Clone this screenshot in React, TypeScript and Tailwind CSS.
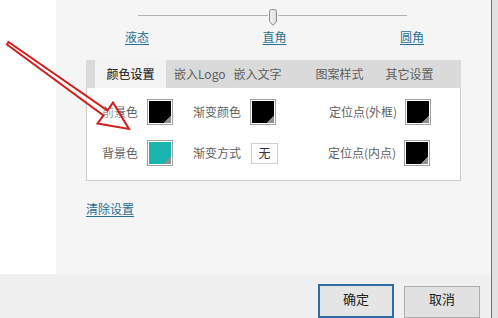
import React from "react";

const font = { fontFamily: '"Noto Sans CJK SC", "Noto Sans", sans-serif' };

function Swatch({ color }: { color: "black" | "teal" }) {
  const inner =
    color === "black"
      ? "bg-[linear-gradient(135deg,#000_83%,#8f8f8f_83%)]"
      : "bg-[linear-gradient(135deg,#19b4ad_83%,#8f8f8f_83%)]";
  return (
    <div className="w-[26px] h-[26px] border border-[#a3a3a3] bg-white p-[1px] flex">
      <div className={`flex-1 ${inner}`} />
    </div>
  );
}

export default function App() {
  return (
    <div
      className="relative w-[498px] h-[318px] overflow-hidden flex bg-[#e4e4e4] text-[12px] leading-[16px]"
      style={font}
    >
      <div className="w-[491px] flex flex-col">
        <div className="h-[277px] flex">
          <div className="w-[56px] bg-white" />
          <div className="flex-1 bg-[#f5f5f5] flex flex-col">
            {/* slider */}
            <div className="mt-[9px] ml-[82px] w-[269px] h-[17px] flex items-start">
              <div className="w-[130px] h-px mt-[6px] bg-[#b3b3b3]" />
              <svg width="10" height="17" viewBox="0 0 10 17" className="block">
                <defs>
                  <linearGradient id="tg" x1="0" y1="0" x2="1" y2="0">
                    <stop offset="0" stopColor="#f4f4f4" />
                    <stop offset="1" stopColor="#dcdcdc" />
                  </linearGradient>
                </defs>
                <path
                  d="M1.5 2.5 Q1.5 0.5 3.5 0.5 L6.5 0.5 Q8.5 0.5 8.5 2.5 L8.5 12.5 L5 16.3 L1.5 12.5 Z"
                  fill="url(#tg)"
                  stroke="#8c8c8c"
                  strokeWidth="1"
                />
              </svg>
              <div className="flex-1 h-px mt-[6px] bg-[#b3b3b3]" />
            </div>
            <div className="mt-[3px] ml-[69px] w-[299px] flex justify-between text-[#2b6f93]">
              <span className="underline underline-offset-2">液态</span>
              <span className="underline underline-offset-2">直角</span>
              <span className="underline underline-offset-2">圆角</span>
            </div>

            {/* tab box */}
            <div className="mt-[15px] ml-[30px] w-[375px] flex flex-col">
              <div className="h-[28px] bg-[#dadada] flex items-stretch text-[#5f5f5f]">
                <div className="ml-[9px] w-[71px] bg-[#f3f3f3] flex items-center justify-center text-[#333] font-medium">
                  颜色设置
                </div>
                <div className="ml-[8px] flex items-center">嵌入Logo</div>
                <div className="ml-[8px] flex items-center">嵌入文字</div>
                <div className="ml-[34px] flex items-center">图案样式</div>
                <div className="ml-[22px] flex items-center">其它设置</div>
              </div>
              <div className="bg-white border-x border-b border-[#cdcdcd] pt-[11px] pb-[14px] text-[#5f5f5f]">
                <div className="flex items-center">
                  <div className="w-[51px] text-right">前景色</div>
                  <div className="ml-[9px]">
                    <Swatch color="black" />
                  </div>
                  <div className="ml-[20px] w-[48px]">渐变颜色</div>
                  <div className="ml-[9px]">
                    <Swatch color="black" />
                  </div>
                  <div className="ml-[53px] w-[68px] whitespace-nowrap">定位点(外框)</div>
                  <div className="ml-[8px]">
                    <Swatch color="black" />
                  </div>
                </div>
                <div className="mt-[15px] flex items-center">
                  <div className="w-[51px] text-right">背景色</div>
                  <div className="ml-[9px]">
                    <Swatch color="teal" />
                  </div>
                  <div className="ml-[20px] w-[48px]">渐变方式</div>
                  <div className="ml-[10px] w-[25px] flex">
                    <div className="w-[27px] h-[21px] shrink-0 border border-[#d0d0d0] bg-white flex items-center justify-center text-[#333]">
                      无
                    </div>
                  </div>
                  <div className="ml-[52px] w-[68px] whitespace-nowrap">定位点(内点)</div>
                  <div className="ml-[8px]">
                    <Swatch color="black" />
                  </div>
                </div>
              </div>
            </div>

            <div className="mt-[20px] ml-[30px] text-[#2b6f93] underline underline-offset-2">
              清除设置
            </div>
          </div>
        </div>
        <div className="flex-1 bg-[#f0f0f0] flex justify-end items-start pt-[10px] pr-[11px] gap-[10px] text-[13px] text-[#222]">
          <div className="w-[76px] h-[34px] border-2 border-[#2e6ea4] bg-[#e5e5e5] flex justify-center pt-[5px]">
            确定
          </div>
          <div className="mt-[2px] w-[76px] h-[32px] border border-[#adadad] bg-[#e1e1e1] flex justify-center pt-[4px]">
            取消
          </div>
        </div>
      </div>
      <div className="w-px bg-[#3f7db3]" />
      <div className="flex-1 bg-[#e2e2e2]" />

      {/* red annotation arrow */}
      <svg
        className="absolute left-0 top-0 pointer-events-none"
        width="498"
        height="318"
        viewBox="0 0 498 318"
      >
        <polygon
          points="8.5,42 107.5,110.6 113,102.5 129,129 97.5,123.5 103.5,115.4 7,44.5"
          fill="rgba(255,255,255,0.35)"
          stroke="#d11d1d"
          strokeWidth="2"
          strokeLinejoin="miter"
        />
      </svg>
    </div>
  );
}
